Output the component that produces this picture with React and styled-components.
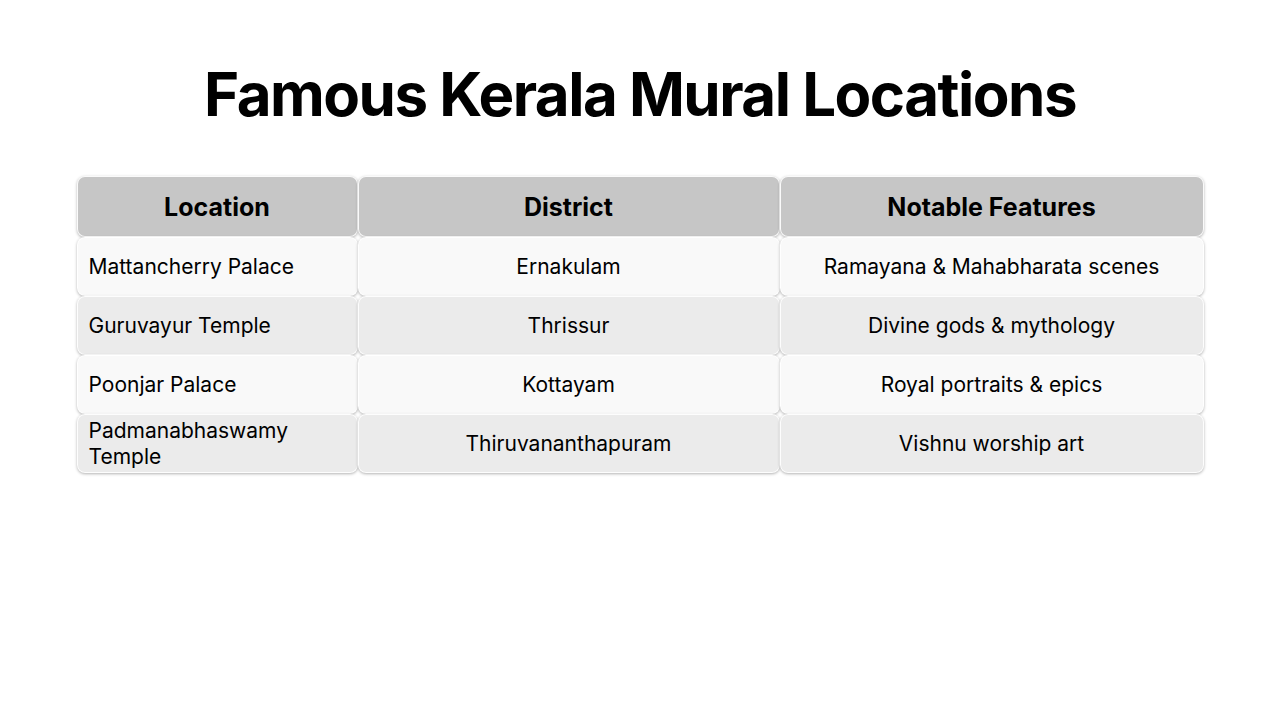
import React from "react";
import styled, { createGlobalStyle } from "styled-components";

const Global = createGlobalStyle`
  html, body { margin: 0; padding: 0; background: #ffffff; }
  body { font-family: Inter, "Noto Sans", "Liberation Sans", sans-serif; color: #000; }
`;

const Page = styled.div`
  width: 1280px;
  height: 720px;
  display: flex;
  flex-direction: column;
  align-items: center;
  box-sizing: border-box;
  padding-top: 58px;
`;

const Title = styled.h1`
  margin: 0;
  font-size: 60px;
  line-height: 72px;
  font-weight: 700;
  letter-spacing: -0.025em;
  text-align: center;
`;

const Table = styled.div`
  margin-top: 46px;
  display: grid;
  grid-template-columns: 281px 422px 424px;
  grid-template-rows: 61px repeat(4, 59px);
`;

const Cell = styled.div`
  box-sizing: border-box;
  border-radius: 8px;
  border: 1px solid rgba(255, 255, 255, 0.9);
  box-shadow: 0 1px 3px rgba(0, 0, 0, 0.3);
  background: ${(p) => (p.$head ? "#c6c6c6" : p.$odd ? "#ebebeb" : "#f9f9f9")};
  display: flex;
  align-items: center;
  justify-content: ${(p) => (p.$left ? "flex-start" : "center")};
  text-align: ${(p) => (p.$left ? "left" : "center")};
  padding: 0 11px;
  font-size: ${(p) => (p.$head ? "25px" : "21px")};
  font-weight: ${(p) => (p.$head ? 700 : 400)};
  line-height: 26px;
  letter-spacing: 0;
  color: #000;
`;

const head = ["Location", "District", "Notable Features"];
const rows = [
  ["Mattancherry Palace", "Ernakulam", "Ramayana & Mahabharata scenes"],
  ["Guruvayur Temple", "Thrissur", "Divine gods & mythology"],
  ["Poonjar Palace", "Kottayam", "Royal portraits & epics"],
  ["Padmanabhaswamy Temple", "Thiruvananthapuram", "Vishnu worship art"],
];

export default function App() {
  return (
    <>
      <Global />
      <Page>
        <Title>Famous Kerala Mural Locations</Title>
        <Table>
          {head.map((h) => (
            <Cell key={h} $head>
              {h}
            </Cell>
          ))}
          {rows.map((r, i) =>
            r.map((c, j) => (
              <Cell key={i + "-" + j} $odd={i % 2 === 1} $left={j === 0}>
                {c}
              </Cell>
            ))
          )}
        </Table>
      </Page>
    </>
  );
}
